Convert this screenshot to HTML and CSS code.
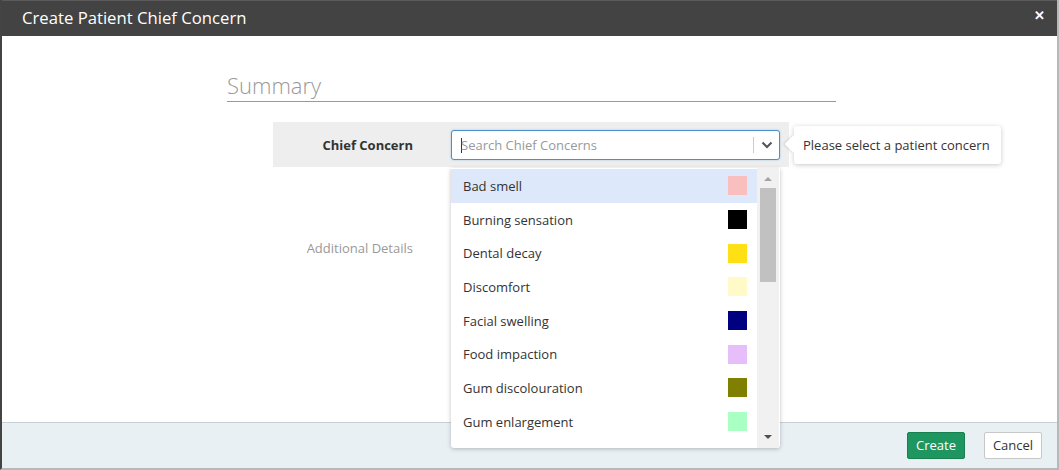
FILE: index.html
```html
<!DOCTYPE html>
<html>
<head>
<meta charset="utf-8">
<link rel="stylesheet" href="styles.css">
</head>
<body>
<div class="modal">
  <div class="modal-header">
    <span class="modal-title">Create Patient Chief Concern</span>
    <span class="modal-close">&#x2715;</span>
  </div>
  <div class="modal-body">
    <div class="section">
      <div class="section-title">Summary</div>
      <div class="form-row form-row--active">
        <div class="form-label form-label--bold">Chief Concern</div>
        <div class="select-wrap">
          <div class="select-box">
            <span class="caret"></span>
            <span class="placeholder">Search Chief Concerns</span>
            <span class="select-sep"></span>
            <svg class="chevron" width="12" height="8" viewBox="0 0 12 8"><path d="M1.5 1.5 L6 6 L10.5 1.5" fill="none" stroke="#555" stroke-width="2"/></svg>
          </div>
          <div class="tooltip">Please select a patient concern</div>
          <div class="dropdown">
            <ul class="options">
              <li class="option option--hover"><span>Bad smell</span><i class="swatch" style="background:#f9bfbf"></i></li>
              <li class="option"><span>Burning sensation</span><i class="swatch" style="background:#000000"></i></li>
              <li class="option"><span>Dental decay</span><i class="swatch" style="background:#ffe015"></i></li>
              <li class="option"><span>Discomfort</span><i class="swatch" style="background:#fffac8"></i></li>
              <li class="option"><span>Facial swelling</span><i class="swatch" style="background:#000080"></i></li>
              <li class="option"><span>Food impaction</span><i class="swatch" style="background:#e6befa"></i></li>
              <li class="option"><span>Gum discolouration</span><i class="swatch" style="background:#808000"></i></li>
              <li class="option"><span>Gum enlargement</span><i class="swatch" style="background:#aaffc3"></i></li>
            </ul>
            <div class="scrollbar">
              <span class="arrow arrow--up"></span>
              <span class="thumb"></span>
              <span class="arrow arrow--down"></span>
            </div>
          </div>
        </div>
      </div>
      <div class="form-row form-row--details">
        <div class="form-label form-label--muted">Additional Details</div>
      </div>
    </div>
  </div>
  <div class="modal-footer">
    <button class="btn btn--primary">Create</button>
    <button class="btn btn--default">Cancel</button>
  </div>
</div>
</body>
</html>
```
FILE: styles.css
```css
* { box-sizing: border-box; }
html, body { margin: 0; padding: 0; }
body {
  font-family: "Open Sans", "Liberation Sans", sans-serif;
  font-size: 13px;
  color: #333;
  background: #fff;
}
.modal {
  width: 1059px;
  height: 470px;
  display: flex;
  flex-direction: column;
  border-left: 2px solid #444;
  border-right: 2px solid #b8b8b8;
  border-bottom: 2px solid #b8b8b8;
  overflow: hidden;
}
.modal-header {
  height: 36px;
  flex: none;
  background: #434343;
  border-top: 1px solid #5a5a5a;
  display: flex;
  align-items: center;
  justify-content: space-between;
  padding: 0 12px 2px 22px;
  margin-left: -2px;
  color: #fff;
}
.modal-title { font-size: 16.7px; }
.modal-close { font-size: 13px; font-weight: bold; margin-top: -6px; }
.modal-body {
  flex: 1;
  background: #fff;
  position: relative;
}
.section {
  margin-left: 225px;
  width: 609px;
  padding-top: 34px;
}
.section-title {
  font-size: 22px;
  font-weight: 300;
  color: #999;
  line-height: 30px;
  padding-bottom: 1px;
  border-bottom: 1px solid #999;
}
.form-row {
  display: flex;
  align-items: center;
  margin-left: 46px;
  width: 516px;
}
.form-row--active {
  margin-top: 20px;
  background: #eee;
  padding: 8px 9px 7px 0;
}
.form-label {
  width: 178px;
  padding-right: 38px;
  text-align: right;
  flex: none;
}
.form-label--bold { font-weight: bold; color: #333; }
.form-label--muted { color: #999; }
.form-row--details { margin-top: 72px; }
.select-wrap {
  position: relative;
  width: 329px;
}
.select-box {
  height: 30px;
  border: 1px solid #4a8fd0;
  border-radius: 3px;
  background: #fff;
  box-shadow: 0 0 2px rgba(74,143,208,0.5);
  display: flex;
  align-items: center;
  padding: 0 6px 0 9px;
}
.caret {
  width: 1px;
  height: 15px;
  background: #333;
  margin-right: -1px;
}
.placeholder { color: #999; flex: 1; }
.select-sep {
  width: 1px;
  height: 16px;
  background: #ccc;
  margin-right: 7px;
}
.chevron { display: block; }
.tooltip {
  position: absolute;
  left: 343px;
  top: -4px;
  width: 207px;
  height: 38px;
  background: #fff;
  border-radius: 3px;
  box-shadow: 0 1px 5px rgba(0,0,0,0.22);
  display: flex;
  align-items: center;
  padding-left: 9px;
  color: #333;
  white-space: nowrap;
}
.tooltip::before {
  content: "";
  position: absolute;
  left: -7px;
  top: 12px;
  width: 12px;
  height: 12px;
  background: #fff;
  transform: rotate(45deg);
  box-shadow: -1px 1px 2px rgba(0,0,0,0.12);
}
.dropdown {
  position: absolute;
  left: 0;
  top: 38px;
  width: 329px;
  height: 280px;
  background: #fff;
  border-radius: 0 0 3px 3px;
  box-shadow: 0 1px 4px rgba(0,0,0,0.25);
  display: flex;
  padding-top: 1px;
  z-index: 2;
}
.options {
  list-style: none;
  margin: 0;
  padding: 0;
  flex: 1;
}
.option {
  height: 33.7px;
  display: flex;
  align-items: center;
  justify-content: space-between;
  padding: 0 10px 0 12px;
  color: #333;
}
.option--hover { background: #dde9fb; }
.swatch {
  width: 19px;
  height: 19px;
  display: block;
}
.scrollbar {
  width: 22px;
  margin-top: -1px;
  margin-right: 1px;
  background: #f1f1f1;
  display: flex;
  flex-direction: column;
  align-items: center;
  position: relative;
}
.arrow {
  width: 0;
  height: 0;
  border-left: 4px solid transparent;
  border-right: 4px solid transparent;
}
.arrow--up { border-bottom: 4px solid #a3a3a3; margin-top: 9px; }
.arrow--down { border-top: 4px solid #505050; position: absolute; bottom: 9px; }
.thumb {
  width: 16px;
  height: 94px;
  background: #c1c1c1;
  margin-top: 7px;
}
.modal-footer {
  height: 46px;
  flex: none;
  background: #e9f0f4;
  border-top: 1px solid #c9d1d6;
  display: flex;
  justify-content: flex-end;
  align-items: center;
  gap: 19px;
  padding: 0 15px 1px 0;
}
.btn {
  font-family: "Open Sans", "Liberation Sans", sans-serif;
  font-size: 13px;
  height: 27px;
  width: 58px;
  border-radius: 2px;
  padding: 0;
  cursor: pointer;
}
.btn--primary {
  background: #1f955f;
  border: 1px solid #17804f;
  color: #fff;
}
.btn--default {
  background: #fff;
  border: 1px solid #c8c8c8;
  color: #333;
}
```
